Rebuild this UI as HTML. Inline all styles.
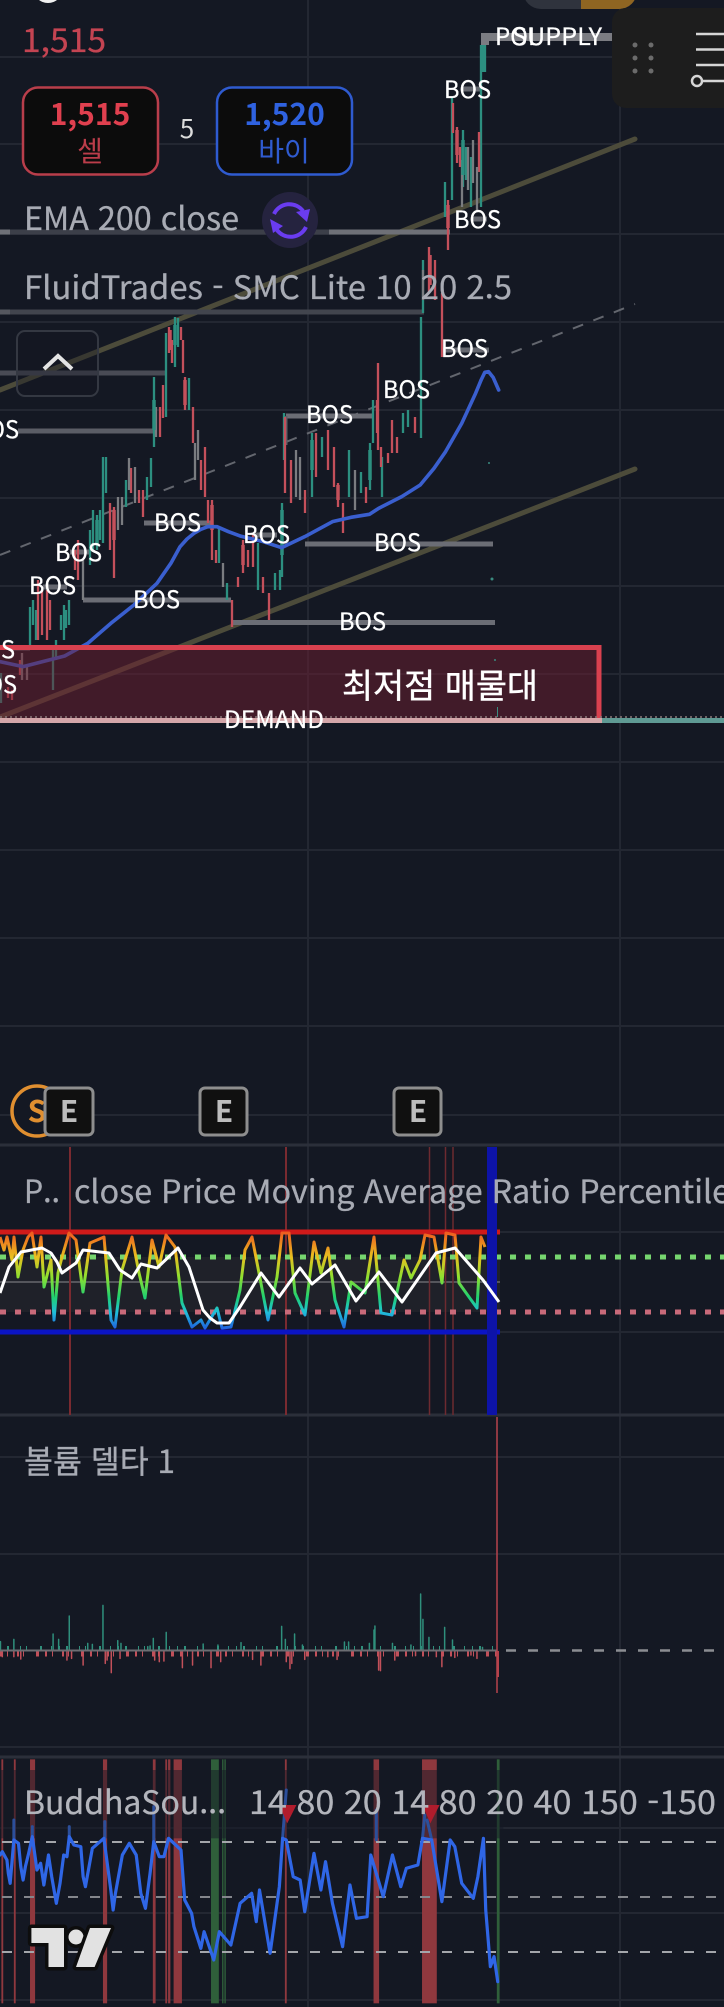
<!DOCTYPE html>
<html lang="ko">
<head>
<meta charset="utf-8">
<title>Chart</title>
<style>
html,body{margin:0;padding:0;background:#141823;width:724px;height:2007px;overflow:hidden}
svg{display:block}
text{font-family:"Noto Sans CJK KR","Liberation Sans",sans-serif}
.b{fill:#fff;font-size:24px;stroke:#fff;stroke-width:.25px}
.l{fill:#a8abb4;font-size:32px;stroke:#a8abb4;stroke-width:.3px}
.ns{vector-effect:non-scaling-stroke;fill:none;stroke-linejoin:round;stroke-linecap:round}
</style>
</head>
<body>
<svg xmlns="http://www.w3.org/2000/svg" width="724" height="2007" viewBox="0 0 724 2007">
<rect width="724" height="2007" fill="#141823"/>
<!-- grid -->
<g stroke="#232732" stroke-width="2">
<path d="M308 0V2007M620 0V2007"/>
<path d="M0 57H724M0 144H724M0 234H724M0 322H724M0 410H724M0 498H724M0 586H724M0 674H724M0 762H724M0 850H724M0 938H724M0 1026H724M0 1115H724M0 1232H724M0 1332H724M0 1457H724M0 1554H724M0 1747H724M0 1828H724M0 1913H724M0 2000H724"/>
</g>
<path d="M0 1145H724M0 1415H724M0 1757H724" stroke="#2b2f3a" stroke-width="3"/>

<!-- trend lines -->
<path d="M0 390L635 139M0 717L635 469" stroke="#4c4b3a" stroke-width="5" stroke-linecap="round"/>
<path d="M0 555L635 304" stroke="#63666e" stroke-width="2" stroke-dasharray="11 11"/>

<!-- structure levels -->
<g fill="none" stroke-width="5">
<path d="M0 232H10M329 232H450" stroke="#6e7077"/>
<path d="M10 232H329" stroke="#3c3f49"/>
<path d="M0 312H10" stroke="#55575f"/>
<path d="M10 312H424" stroke="#42454e"/>
<path d="M0 373H166" stroke="#494b55"/>
<path d="M18 431H153" stroke="#5b5d66"/>
<path d="M144 523H211" stroke="#6b6d75"/>
<path d="M83 600H231" stroke="#6b6d75"/>
<path d="M233 622.5H495" stroke="#6b6d75"/>
<path d="M305 544H493" stroke="#6b6d75"/>
<path d="M286 416H374" stroke="#6b6d75"/>
<path d="M286 416V445" stroke="#5c5e66" stroke-width="3"/>
<path d="M443 350H489M463 89H480M473 219H487M43 587H67M70 552H90M13 648H30M253 535H277" stroke="#65676f"/>
<path d="M485 45V37H612" stroke="#7b7c82" stroke-width="8"/>
</g>

<!-- candles -->
<g fill="none" stroke-width="2.300">
<path stroke="#2c8f80" d="M1 673V703M30 607V650M33 600V625M36 610V640M53 650V690M56 640V660M61 615V630M64 605V640M66 610V628M69 600V625M90 530V565M93 510V550M97 515V550M100 510V540M103 457V543M106 457V493M126 480V507M147 477V500M151 458V487M154 377V447M166 333V417M175 317V367M178 318V347M189 378V410M219 527V563M227 583V600M258 543V590M275 573V590M280 570V590M282 503V577M284 413V460M312 433V497M322 437V457M349 450V497M361 472V493M370 443V490M373 400V443M382 457V497M403 413V433M408 410V427M421 317V438M423 260V313M445 182V217M452 97V200M463 130V187M466 147V180M471 157V207M481 45V207M483 45V72M485 45V72"/>
<path stroke="#c4505b" d="M8 687V698M12 690V700M20 660V675M38 580V640M42 590V635M47 590V640M50 600V630M75 550V570M78 540V580M110 503V550M114 507V578M131 468V493M139 490V503M143 490V517M160 407V437M163 385V418M169 327V353M172 340V363M181 327V340M183 340V373M185 377V410M193 407V443M201 460V490M205 447V497M208 500V523M212 500V560M216 550V563M232 600V627M238 577V587M243 540V573M248 550V567M253 533V567M263 577V593M269 593V620M285 417V493M291 460V503M305 490V513M316 433V477M328 430V470M334 447V487M338 483V507M343 503V533M366 487V503M377 400V433M378 363V450M381 447V467M388 453V463M392 420V453M397 437V453M415 417V433M429 247V293M435 260V300M442 293V357M448 200V250M453 103V133M457 127V163M460 147V167M479 132V172"/>
<path stroke="#7a7c80" d="M22 653V680M27 665V680M83 560V600M118 497V530M122 497V525M129 458V490M135 467V503M156 407V437M195 443V480M198 430V460M223 563V587M296 450V497M300 457V500M355 470V510M423 270V300M462 160V207M468 147V190M473 140V183M477 167V210"/>
<path stroke="#c4505b" stroke-width="3.500" d="M114 510V540M185 380V405M212 505V530M243 545V565M338 485V500M448 205V228M457 130V155M170 330V350M430 255V285"/>
<path stroke="#2c8f80" stroke-width="3.500" d="M97 520V545M154 400V430M175 325V345M282 510V555M312 440V470M370 450V480M483 48V70M463 140V175M65 610V625"/>
</g>

<!-- EMA -->
<g transform="translate(0,300) scale(.46173,.33333)">
<polyline class="ns" stroke="#3a5fcf" stroke-width="3.600" points="0,1085 50,1100 140,1068 190,1030 240,970 290,915 340,850 370,790 390,740 405,717 420,700 435,688 450,680 470,680 495,695 520,708 570,725 610,743 660,710 700,680 720,665 760,652 800,643 820,625 870,590 910,555 940,505 965,455 1000,370 1030,280 1042,240 1050,217 1058,215 1068,232 1080,270"/>
</g>

<!-- demand box -->
<rect x="0" y="648" width="599" height="71" fill="#6e1e30" fill-opacity=".5"/>
<path d="M0 647.5H599V719" fill="none" stroke="#d9414f" stroke-width="5"/>
<path d="M0 720.5H602" stroke="#d4a6a9" stroke-width="5"/>
<path d="M602 720.5H724" stroke="#5f9a94" stroke-width="5"/>
<path d="M0 717H724" stroke="#8a7a7a" stroke-width="1.5" stroke-dasharray="2 3"/>
<g fill="#3a8b80"><circle cx="489" cy="463" r="1"/><circle cx="492" cy="579" r="1.5"/><circle cx="495" cy="660" r="1"/><rect x="497" y="707" width="1" height="10"/></g>

<!-- labels on chart -->
<text class="b" x="-28" y="438" textLength="47" lengthAdjust="spacingAndGlyphs">BOS</text>
<text class="b" x="-32" y="658" textLength="47" lengthAdjust="spacingAndGlyphs">BOS</text>
<text class="b" x="-30" y="693" textLength="47" lengthAdjust="spacingAndGlyphs">BOS</text>
<text class="b" x="444" y="98" textLength="47" lengthAdjust="spacingAndGlyphs">BOS</text>
<text class="b" x="454" y="228" textLength="47" lengthAdjust="spacingAndGlyphs">BOS</text>
<text class="b" x="441" y="357" textLength="47" lengthAdjust="spacingAndGlyphs">BOS</text>
<text class="b" x="383" y="398" textLength="47" lengthAdjust="spacingAndGlyphs">BOS</text>
<text class="b" x="306" y="423" textLength="47" lengthAdjust="spacingAndGlyphs">BOS</text>
<text class="b" x="154" y="531" textLength="47" lengthAdjust="spacingAndGlyphs">BOS</text>
<text class="b" x="243" y="543" textLength="47" lengthAdjust="spacingAndGlyphs">BOS</text>
<text class="b" x="374" y="551" textLength="47" lengthAdjust="spacingAndGlyphs">BOS</text>
<text class="b" x="55" y="561" textLength="47" lengthAdjust="spacingAndGlyphs">BOS</text>
<text class="b" x="29" y="594" textLength="47" lengthAdjust="spacingAndGlyphs">BOS</text>
<text class="b" x="133" y="608" textLength="47" lengthAdjust="spacingAndGlyphs">BOS</text>
<text class="b" x="339" y="630" textLength="47" lengthAdjust="spacingAndGlyphs">BOS</text>
<text class="b" x="495" y="45" textLength="40" lengthAdjust="spacingAndGlyphs">POI</text>
<text class="b" x="512" y="45" textLength="90" lengthAdjust="spacingAndGlyphs">SUPPLY</text>
<text class="b" x="224" y="728" textLength="100" lengthAdjust="spacingAndGlyphs">DEMAND</text>
<text x="342" y="698" fill="#fff" stroke="#fff" stroke-width=".4" font-size="34" textLength="196" lengthAdjust="spacingAndGlyphs">최저점 매물대</text>

<!-- top overlays -->
<circle cx="48" cy="-12" r="15" fill="#f0f0f0"/>
<path d="M523 -10H637V-9A18 18 0 0 1 619 9H541A18 18 0 0 1 523 -9Z" fill="#2f333d"/>
<path d="M581 -10H637V-9A18 18 0 0 1 619 9H581Z" fill="#8f6522"/>
<path d="M730 8H626A14 14 0 0 0 612 22V94A14 14 0 0 0 626 108H730Z" fill="#1d1d1d"/>
<g fill="#6b6b6b"><circle cx="635" cy="45" r="2.5"/><circle cx="651" cy="45" r="2.5"/><circle cx="635" cy="58" r="2.5"/><circle cx="651" cy="58" r="2.5"/><circle cx="635" cy="71" r="2.5"/><circle cx="651" cy="71" r="2.5"/></g>
<path d="M696 34H724M696 49.500H724M696 65H724M703 81H724" stroke="#d6d6d6" stroke-width="2.500"/>
<circle cx="697" cy="81" r="5" fill="none" stroke="#d6d6d6" stroke-width="2.500"/>

<text x="22" y="52" fill="#c44452" stroke="#c44452" stroke-width=".3" font-size="32" textLength="84" lengthAdjust="spacingAndGlyphs">1,515</text>
<rect x="23" y="87.500" width="135" height="87" rx="15" fill="#0c0c0c" stroke="#b93e4b" stroke-width="2.500"/>
<text x="90" y="125" fill="#e0404f" font-size="30" font-weight="bold" text-anchor="middle">1,515</text>
<text x="90" y="161" fill="#bb3d4a" font-size="28" text-anchor="middle">셀</text>
<text x="187" y="138" fill="#dcdcdc" font-size="26" text-anchor="middle">5</text>
<rect x="217" y="87.500" width="135" height="87" rx="15" fill="#0c0c0c" stroke="#2f5bd0" stroke-width="2.500"/>
<text x="284.500" y="125" fill="#2f62e0" font-size="30" font-weight="bold" text-anchor="middle">1,520</text>
<text x="284" y="161" fill="#2f5bd0" font-size="28" text-anchor="middle">바이</text>

<text class="l" x="24" y="230" textLength="215" lengthAdjust="spacingAndGlyphs">EMA 200 close</text>
<text class="l" x="24" y="299" textLength="488" lengthAdjust="spacingAndGlyphs">FluidTrades - SMC Lite 10 20 2.5</text>
<circle cx="290" cy="220" r="28" fill="#25233f"/>
<g fill="none" stroke="#6a3cf0" stroke-width="4">
<path d="M274 214A17 17 0 0 1 303 211"/>
<path d="M306 227A17 17 0 0 1 277 230"/>
</g>
<g fill="#6a3cf0"><path d="M296 212L310 209L307 222Z"/><path d="M270 219L283 226L273 233Z"/></g>

<!-- collapse button -->
<rect x="17" y="331" width="81" height="65" rx="8" fill="#141823" fill-opacity=".35" stroke="#343842" stroke-width="2"/>
<path d="M44 369L58 356L72 369" fill="none" stroke="#e4e4e4" stroke-width="4"/>

<!-- events -->
<circle cx="37" cy="1111" r="25" fill="#141823" stroke="#e08f30" stroke-width="3.500"/>
<text x="37" y="1122" fill="#e08f30" font-size="30" font-weight="bold" text-anchor="middle">S</text>
<g fill="#101010" stroke="#8e8e8e" stroke-width="3">
<rect x="45" y="1088" width="48" height="47" rx="5"/>
<rect x="200" y="1088" width="47" height="47" rx="5"/>
<rect x="394" y="1088" width="47" height="47" rx="5"/>
</g>
<g fill="#bdbdbd" font-size="30" font-weight="bold" text-anchor="middle">
<text x="69" y="1122">E</text><text x="224" y="1122">E</text><text x="418" y="1122">E</text>
</g>

<!-- RSI pane -->
<rect x="0" y="1257" width="500" height="55" fill="#1f2129"/>
<path d="M0 1282H500" stroke="#55565c" stroke-width="2"/>
<path d="M70 1147V1415M286 1147V1415" stroke="#7a2a30" stroke-width="2"/>
<path d="M429.500 1147V1415M445.500 1147V1415M453 1147V1415" stroke="#6d2a30" stroke-width="1.500"/>
<path d="M0 1257H724" stroke="#76d66f" stroke-width="5" stroke-dasharray="6 9"/>
<path d="M0 1312H724" stroke="#c96a7a" stroke-width="5" stroke-dasharray="6 9"/>
<defs>
<linearGradient id="rb" gradientUnits="userSpaceOnUse" x1="0" y1="1232" x2="0" y2="1332">
<stop offset="0" stop-color="#f05a20"/><stop offset=".25" stop-color="#e8c020"/><stop offset=".45" stop-color="#8fe030"/><stop offset=".65" stop-color="#20d070"/><stop offset=".8" stop-color="#20c0d8"/><stop offset="1" stop-color="#2050e0"/>
</linearGradient>
</defs>
<path d="M0 1232H500" stroke="#d01a1a" stroke-width="5"/>
<path d="M0 1332H500" stroke="#0b14c4" stroke-width="5"/>
<rect x="487" y="1147" width="10" height="268" fill="#0d13a8"/>
<polyline fill="none" stroke="url(#rb)" stroke-width="3" stroke-linejoin="round" points="0,1237 4,1250 7,1237 12,1260 14,1237 18,1277 23,1250 28,1237 32,1233 37,1267 41,1237 44,1287 51,1260 54,1320 58,1273 62,1257 69,1233 76,1240 83,1292 90,1243 104,1237 111,1320 115,1327 122,1270 132,1237 139,1273 145,1298 152,1240 159,1267 166,1235 175,1247 182,1303 192,1327 201,1320 205,1328 217,1308 222,1328 231,1327 240,1290 245,1250 252,1237 259,1273 268,1320 277,1277 282,1233 289,1233 295,1293 305,1315 314,1242 321,1273 328,1248 335,1300 344,1327 351,1282 365,1293 374,1237 381,1313 392,1315 404,1260 411,1278 420,1260 425,1235 434,1237 442,1283 446,1233 455,1235 459,1283 469,1297 477,1308 481,1237 485,1247"/>
<polyline fill="none" stroke="#fff" stroke-width="3" stroke-linejoin="round" points="0,1293 9,1267 21,1252 42,1248 51,1253 57,1262 62,1273 76,1263 83,1250 109,1253 120,1270 132,1278 141,1264 157,1268 178,1248 189,1267 203,1310 210,1318 217,1323 229,1323 240,1307 261,1273 279,1297 300,1268 312,1284 335,1265 356,1301 379,1272 402,1302 436,1253 455,1248 483,1280 499,1302"/>
<text class="l" x="24" y="1203" textLength="36" lengthAdjust="spacingAndGlyphs">P..</text>
<text class="l" x="74" y="1203" textLength="656" lengthAdjust="spacingAndGlyphs">close Price Moving Average Ratio Percentile</text>

<!-- volume delta pane -->
<text class="l" x="24" y="1473" textLength="151" lengthAdjust="spacingAndGlyphs">볼륨 델타 1</text>
<path d="M0 1648H497" stroke="#2f8f7c" stroke-width="4" stroke-dasharray="1 6 2 11 1 5 1 13 2 9 1 7"/>
<path d="M0 1654H497" stroke="#c2505a" stroke-width="5" stroke-dasharray="2 5 1 9 2 4 1 12 3 6"/>
<g transform="translate(0,1400) scale(.46173,.33333)">
<path class="ns" stroke="#2f8f7c" stroke-width="1.500" d="M1 752V725M30 752V718M115 752V702M127 752V718M150 752V648M190 752V730M200 752V733M223 752V616M255 752V722M262 752V730M320 752V740M325 752V738M332 752V715M360 752V697M440 752V732M472 752V735M522 752V728M610 752V679M618 752V718M638 752V702M655 752V735M746 752V726M755 752V726M800 752V730M810 752V690M812 752V678M850 752V730M890 752V735M911 752V582M916 752V658M929 752V712M963 752V682M980 752V720M1045 752V742"/>
<path class="ns" stroke="#c2505a" stroke-width="1.500" d="M5 752V770M30 752V770M45 752V777M100 752V765M145 752V780M155 752V775M180 752V795M228 752V790M232 752V780M241 752V818M260 752V775M335 752V780M345 752V785M355 752V783M395 752V803M417 752V795M457 752V803M478 752V785M547 752V778M565 752V795M620 752V785M628 752V806M632 752V790M660 752V778M710 752V770M730 752V778M820 752V810M824 752V812M855 752V780M900 752V767M945 752V770M957 752V800M985 752V772M1020 752V765M1033 752V775"/>
</g>
<path d="M0 1650.500H497" stroke="#6b6d72" stroke-width="2"/>
<path d="M506 1650.500H724" stroke="#8b8d92" stroke-width="2.500" stroke-dasharray="10 12"/>
<path d="M497 1417V1693" stroke="#b6424c" stroke-width="1.500"/>
<path d="M498 1651V1677" stroke="#b6424c" stroke-width="2"/>

<!-- bottom pane -->
<g transform="translate(0,1740) scale(.46173,.33333)">
<g fill="#8f383e">
<rect x="3" y="58" width="4" height="732"/><rect x="30" y="58" width="4" height="732"/><rect x="65" y="58" width="11" height="732"/><rect x="223" y="58" width="9" height="732"/><rect x="331" y="58" width="6" height="732"/><rect x="358" y="58" width="4" height="732"/><rect x="364" y="58" width="5" height="732"/><rect x="376" y="58" width="18" height="732"/><rect x="617" y="58" width="4" height="732"/><rect x="809" y="58" width="12" height="732"/><rect x="914" y="58" width="32" height="732"/>
</g>
<g fill="#2f5f3a">
<rect x="457" y="58" width="17" height="732"/><rect x="481" y="58" width="3" height="732"/><rect x="486" y="58" width="3" height="732"/><rect x="1076" y="58" width="6" height="732"/>
</g>
<rect x="0" y="90" width="1090" height="205" fill="#141823" fill-opacity=".5"/>
<path class="ns" stroke="#2c4f9a" stroke-width="3" d="M30 300V240M70 290V260M150 290V260M227 295V245M333 305V200M612 295L620 150M815 300V210M915 295L920 225M935 300L925 240"/>
</g>
<path d="M0 1842H724" stroke="#a4a6ab" stroke-width="2" stroke-dasharray="10 12" stroke-dashoffset="-2"/>
<path d="M0 1897H724" stroke="#84868c" stroke-width="2" stroke-dasharray="10 12" stroke-dashoffset="-2"/>
<path d="M0 1952H724" stroke="#a4a6ab" stroke-width="2" stroke-dasharray="10 12" stroke-dashoffset="-2"/>
<g transform="translate(0,1740) scale(.46173,.33333)">
<polyline class="ns" stroke="#2f66e6" stroke-width="3.200" points="0,345 5,335 15,360 18,400 22,430 30,300 40,310 45,380 50,420 55,380 62,340 70,290 80,390 88,370 95,435 105,345 112,410 122,490 130,430 138,345 145,350 150,290 160,315 175,320 180,410 185,440 200,325 225,295 240,450 245,510 250,460 265,345 280,310 295,345 305,460 315,505 325,400 333,305 345,350 355,350 365,295 392,330 400,480 415,520 420,560 435,625 442,575 463,660 475,575 500,615 520,490 545,460 555,545 562,450 585,640 605,440 612,295 620,300 635,410 650,420 660,515 680,340 695,450 705,365 720,490 742,620 758,435 772,535 795,530 803,345 830,470 850,345 868,440 880,385 905,375 915,295 935,300 957,485 975,300 985,320 1000,430 1025,475 1035,410 1047,295 1052,510 1062,680 1070,650 1078,725"/>
<path fill="#b01c2c" d="M605 195H642L622 250ZM915 195H952L932 250Z"/>
</g>
<text x="24" y="1814" fill="#b3b5bc" stroke="#b3b5bc" stroke-width=".3" font-size="32" textLength="202" lengthAdjust="spacingAndGlyphs">BuddhaSou...</text>
<text x="249" y="1814" fill="#b3b5bc" stroke="#b3b5bc" stroke-width=".3" font-size="32" textLength="467" lengthAdjust="spacingAndGlyphs">14 80 20 14 80 20 40 150 -150</text>

<!-- logo -->
<g fill="#e2e2e2" stroke="#0d0d0d" stroke-width="7" paint-order="stroke" stroke-linejoin="round">
<path d="M31.400 1928H64V1967H48.500V1943H31.400Z"/>
<circle cx="76" cy="1937" r="7.500"/>
<path d="M90 1928H111L94.600 1967H76Z"/>
</g>
</svg>
</body>
</html>
